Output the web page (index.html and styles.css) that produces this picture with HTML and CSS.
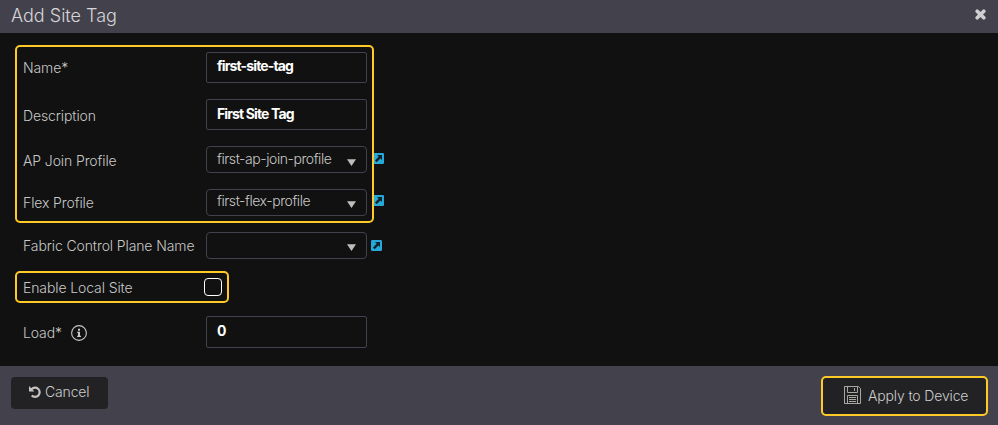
FILE: index.html
```html
<!DOCTYPE html>
<html lang="en">
<head>
<meta charset="utf-8">
<title>Add Site Tag</title>
<link rel="stylesheet" href="styles.css">
</head>
<body>
<svg width="0" height="0" class="defs" aria-hidden="true">
  <symbol id="link" viewBox="0 0 11 11"><rect width="11" height="11" rx="1.2" fill="#25a9d8"/><path d="M4 2h5v5L7.4 5.4 3.6 9.2 2 7.6l3.7-3.8z" fill="#10212a"/></symbol>
  <symbol id="caret" viewBox="0 0 9 7"><path d="M0 .3h9L4.5 7z" fill="#bdbdbd"/></symbol>
</svg>
<div class="modal">
  <header class="header">
    <h1 class="title">Add Site Tag</h1>
    <svg class="close" viewBox="0 0 10 10"><path d="M2 2l6 6M8 2L2 8" stroke="#cfcfd2" stroke-width="3.3" stroke-linecap="round"/></svg>
  </header>
  <main class="body">
    <section class="group group-main">
      <div class="row row-name"><label class="label">Name*</label><div class="field strong">first-site-tag</div></div>
      <div class="row row-desc"><label class="label">Description</label><div class="field strong">First Site Tag</div></div>
      <div class="row row-ap"><label class="label">AP Join Profile</label><div class="field select"><span>first-ap-join-profile</span><svg class="caret"><use href="#caret"/></svg></div><svg class="link"><use href="#link"/></svg></div>
      <div class="row row-flex"><label class="label">Flex Profile</label><div class="field select"><span>first-flex-profile</span><svg class="caret"><use href="#caret"/></svg></div><svg class="link"><use href="#link"/></svg></div>
    </section>
    <div class="row row-fabric"><label class="label">Fabric Control Plane Name</label><div class="field select"><span></span><svg class="caret"><use href="#caret"/></svg></div><svg class="link link-near"><use href="#link"/></svg></div>
    <section class="group group-local">
      <div class="row"><label class="label">Enable Local Site</label><span class="checkbox"></span></div>
    </section>
    <div class="row row-load"><label class="label">Load*<svg class="info" viewBox="0 0 16 16"><circle cx="8" cy="8" r="7.4" fill="none" stroke="#c8c8c8" stroke-width="1.1"/><path d="M7 3.8h2v1.9H7zM6.2 6.8H9v4h1v1.2H6.1v-1.2H7V8h-.8z" fill="#c8c8c8"/></svg></label><div class="field strong load">0</div></div>
  </main>
  <footer class="footer">
    <button class="btn cancel"><svg class="undo" viewBox="0 0 12 12"><path d="M2.4 3.4A4.6 4.6 0 1 1 2.7 9.4" fill="none" stroke="#c4c4c4" stroke-width="2.2"/><path d="M0 0v5.4h5.4z" fill="#c4c4c4"/></svg><span>Cancel</span></button>
    <button class="btn apply"><svg class="save" viewBox="0 0 17 18"><path d="M.5.5h14l2 2v15H.5zM3.5.5v6h10v-6M10.5 2v3M3.5 17.5v-8h10v8M5 11.5h7M5 13.5h7M5 15.5h7" fill="none" stroke="#a8a8a2" stroke-width="1"/></svg><span>Apply to Device</span></button>
  </footer>
</div>
</body>
</html>
```

FILE: styles.css
```css
* { box-sizing: border-box; }
body { margin: 0; background: #111; color: #c8c8c8; font: 300 14px/18px Inter, "Liberation Sans", sans-serif; letter-spacing: -0.11px; }
.defs { position: absolute; }
.modal { height: 425px; display: flex; flex-direction: column; }
.header { height: 33px; background: #43424c; display: flex; align-items: center; justify-content: space-between; padding: 0 12px 2px 11px; }
.title { margin: 0; font-size: 18px; line-height: 24px; font-weight: 300; letter-spacing: 0; color: #d6d6d8; }
.close { width: 11px; height: 11px; margin-top: -2px; }
.body { flex: 1; padding: 12px 15px 0; }
.group { position: relative; padding: 7px 0 0 8px; }
.group::after { content: ""; position: absolute; inset: 0; border: 2px solid #ffc928; border-radius: 5px; pointer-events: none; }
.group-main { width: 359px; height: 178px; }
.group-local { width: 214px; height: 32px; margin-top: 12px; }
.row { display: flex; align-items: center; white-space: nowrap; }
.label { width: 183px; flex: none; padding-top: 1px; display: flex; align-items: center; }
.field { width: 161px; height: 31px; flex: none; border: 1px solid #43424c; border-radius: 2px; padding: 5px 10px 0; }
.strong { color: #fff; font-weight: 700; letter-spacing: -0.87px; }
.row-name .field { padding-top: 4px; }
.row-desc { margin-top: 16px; }
.row-desc .label, .row-ap .label { padding-top: 3px; }
.row-ap { margin-top: 16px; }
.row-flex { margin-top: 16px; }
.row-fabric { margin: 9px 0 0 8px; }
.select { height: 27px; border-radius: 4px; padding: 3px 10px 0; display: flex; justify-content: space-between; letter-spacing: -0.43px; }
.row-flex .select { padding-top: 2px; }
.caret { width: 9px; height: 7px; margin-top: 9px; flex: none; }
.row-fabric .caret { margin-top: 8px; }
.link { width: 11px; height: 11px; margin: 0 0 3px 6px; flex: none; }
.row-flex .link { margin-bottom: 4px; }
.link-near { margin: 0 0 0 4px; }
.group-local .label { width: 181px; }
.checkbox { width: 18px; height: 18px; margin-bottom: 1px; border: 1px solid #fff; border-radius: 4px; }
.row-load { margin: 13px 0 0 8px; }
.load { height: 32px; }
.info { width: 16px; height: 16px; margin-left: 9px; }
.footer { height: 59px; background: #43424c; display: flex; align-items: flex-start; justify-content: space-between; padding: 10px 10px 0 11px; }
.btn { font: inherit; letter-spacing: -0.15px; color: #ccc; background: #222224; border: 0; display: flex; align-items: center; white-space: nowrap; }
.cancel { width: 97px; height: 32px; margin-top: 1px; border-radius: 4px; padding: 0 0 2px 18px; }
.undo { width: 12px; height: 12px; margin-right: 4px; }
.apply { width: 167px; height: 40px; border: 2px solid #ffc928; border-radius: 5px; padding: 0 0 0 21px; }
.save { width: 17px; height: 18px; margin: 0 7px 2px 0; }
```
